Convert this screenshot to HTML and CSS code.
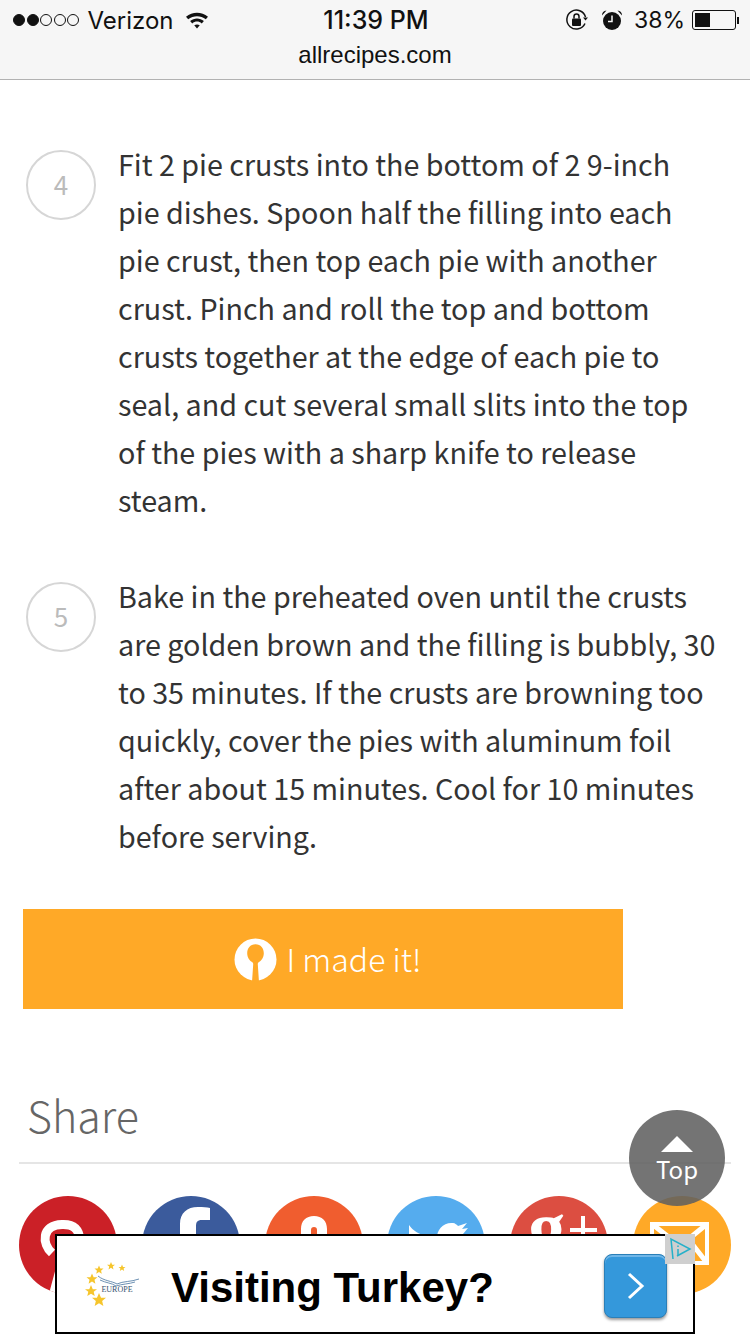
FILE: index.html
```html
<!DOCTYPE html>
<html lang="en">
<head>
	<meta charset="UTF-8">
	<title>allrecipes.com</title>
	<link rel="stylesheet" href="styles.css">
</head>
<body>
	<div id="wrap">
		<div class="top-bar">
			<div class="status">
				<div class="status-left">
					<span class="dot on"></span><span class="dot on"></span><span class="dot"></span><span class="dot"></span><span class="dot"></span>
					<span class="carrier">Verizon</span>
					<svg class="wifi" width="22" height="18" viewBox="0 0 24 19"><path d="M0 6C7 .2 17 .2 24 6L21.6 8.7C16 4.2 8 4.2 2.4 8.7Z" fill="#111"/><path d="M4.5 10.7C9 7 15 7 19.5 10.7L17.2 13.2C14 10.6 10 10.6 6.800 13.2Z" fill="#111"/><path d="M9 15.3C11 14 13 14 15 15.3L12 18.7Z" fill="#111"/></svg>
				</div>
				<div class="clock">11:39 PM</div>
				<div class="status-right">
					<svg width="24" height="24" viewBox="0 0 24 24"><path d="M20 15.5A9.500 9.500 0 1 1 20.500 9" fill="none" stroke="#111" stroke-width="1.5"/><path d="M18 9.5h5l-2.5 3z" fill="#111"/><rect x="7" y="10.5" width="9" height="7.5" rx="1" fill="#111"/><path d="M9 10.5V8.500a2.500 2.500 0 0 1 5 0v2" fill="none" stroke="#111" stroke-width="1.5"/></svg>
					<svg class="alarm" width="22" height="24" viewBox="0 0 22 24"><circle cx="11" cy="13" r="9" fill="#111"/><path d="M11 7.5V13.5H7" fill="none" stroke="#f6f6f6" stroke-width="1.5"/><path d="M1 7.5A5 5 0 0 1 5.5 2.5ZM21 7.5A5 5 0 0 0 16.5 2.5Z" fill="#111"/></svg>
					<span class="pct">38%</span>
					<div class="battery"><div class="battery-fill"></div></div>
					<div class="battery-tip"></div>
				</div>
			</div>
			<div class="url">allrecipes.com</div>
		</div>

		<div class="steps">
			<div class="step">
				<div class="num">4</div>
				<p>Fit 2 pie crusts into the bottom of 2 9-inch<br>pie dishes. Spoon half the filling into each<br>pie crust, then top each pie with another<br>crust. Pinch and roll the top and bottom<br>crusts together at the edge of each pie to<br>seal, and cut several small slits into the top<br>of the pies with a sharp knife to release<br>steam.</p>
			</div>
			<div class="step">
				<div class="num">5</div>
				<p>Bake in the preheated oven until the crusts<br>are golden brown and the filling is bubbly, 30<br>to 35 minutes. If the crusts are browning too<br>quickly, cover the pies with aluminum foil<br>after about 15 minutes. Cool for 10 minutes<br>before serving.</p>
			</div>
		</div>

		<div class="made-it">
			<svg width="43" height="43" viewBox="0 0 44 44"><circle cx="22" cy="22" r="21.5" fill="#fff"/><path d="M22 6.5C16.5 6.5 13.5 11 13.5 15.5C13.5 20 16 23 18.5 24.5C19.5 25.2 19.8 26 19.6 27.5L18.5 44H25.5L24.4 27.5C24.2 26 24.5 25.2 25.5 24.5C28 23 30.5 20 30.5 15.5C30.5 11 27.5 6.5 22 6.5Z" fill="#ffa927"/></svg>
			<span>I made it!</span>
		</div>

		<h2 class="share-title">Share</h2>
		<div class="share-icons">
			<div class="circle pinterest"><svg width="98" height="98" viewBox="0 0 98 98"><path d="M33 57C23 48 22 29 43 28.5C54 28 60 33 61 44" fill="none" stroke="#fff" stroke-width="9"/><path d="M33 98L40 72" fill="none" stroke="#fff" stroke-width="6"/></svg></div>
			<div class="circle facebook"><svg width="98" height="98" viewBox="0 0 98 98"><path d="M38 98V28C38 17 45 11 56 11C61 11 65 11 68 12V24H60C55 24 54 26 54 31V41H67L65 55H54V98Z" fill="#fff"/></svg></div>
			<div class="circle orange"><svg width="98" height="98" viewBox="0 0 98 98"><path d="M49 20C41 20 36 25 36 33V48H46V34C46 32 47 31 49 31C51 31 52 32 52 34V48H62V33C62 25 57 20 49 20Z" fill="#fff"/></svg></div>
			<div class="circle twitter"><svg width="98" height="98" viewBox="0 0 98 98"><path d="M22 29C26 35 32 38 39 40V44H22Z" fill="#fff"/><path d="M50 44C49 33 57 26 66 27C68 27 70 29 71 30L80 27L75 33L81 32L76 38V44Z" fill="#fff"/></svg></div>
			<div class="circle gplus"><span class="g">g</span><svg class="plus" width="98" height="98" viewBox="0 0 98 98"><path d="M60 34H87M73 20V48" fill="none" stroke="#fff" stroke-width="4"/></svg></div>
			<div class="circle mail"><svg width="98" height="98" viewBox="0 0 98 98"><rect x="19" y="28" width="55" height="39" fill="none" stroke="#fff" stroke-width="4"/><path d="M19 28L47 50L74 28M19 67L38 44M74 67L56 44" fill="none" stroke="#fff" stroke-width="5"/></svg></div>
		</div>

		<div class="to-top">
			<div class="arrow"></div>
			<div class="to-top-text">Top</div>
		</div>

		<div class="ad">
			<svg class="ad-logo" width="56" height="46" viewBox="0 0 56 46">
				<defs><path id="star" d="M0 -1L.29 -.31L1 -.31L.45 .14L.62 .85L0 .45L-.62 .85L-.45 .14L-1 -.31L-.29 -.31Z"/></defs>
				<g fill="#f6c52c">
					<use href="#star" transform="translate(14 9) scale(4.5)"/>
					<use href="#star" transform="translate(26 5) scale(4)"/>
					<use href="#star" transform="translate(37 7) scale(3.5)"/>
					<use href="#star" transform="translate(7 18) scale(5.5)"/>
					<use href="#star" transform="translate(6 30) scale(6)"/>
					<use href="#star" transform="translate(14 39) scale(7)"/>
				</g>
				<path d="M13 15C19 20 27 20 32 23C38 20 46 21 54 18M15 19C21 22 27 22 31 25C37 23 44 23 50 21" fill="none" stroke="#6d91b3" stroke-width="1"/>
				<text class="logo-text" x="32" y="31" text-anchor="middle">EUROPE</text>
			</svg>
			<div class="ad-title">Visiting Turkey?</div>
			<div class="ad-btn"><svg width="18" height="28" viewBox="0 0 18 28"><path d="M2 2L15 14L2 26" fill="none" stroke="#fff" stroke-width="3"/></svg></div>
			<div class="ad-choice"><svg width="30" height="30" viewBox="0 0 30 30"><path d="M8 25L6 5L25 15L12 22" fill="none" stroke="#25b0c9" stroke-width="1.5"/><path d="M13 15V21M13 11.5V13" fill="none" stroke="#25b0c9" stroke-width="1.5"/></svg></div>
		</div>
	</div>
</body>
</html>
```

FILE: styles.css
```css
* {
	margin: 0;
	padding: 0;
	box-sizing: border-box;
}
html, body {
	height: 1334px;
	overflow: hidden;
	background-color: #fff;
}
#wrap {
	width: 750px;
	height: 1334px;
	position: relative;
	overflow: hidden;
	font-family: "Noto Sans CJK SC", "Source Sans Pro", "Noto Sans", sans-serif;
	color: #333;
}
.top-bar {
	height: 80px;
	background-color: #f6f6f6;
	border-bottom: 1px solid #b2b2b2;
	font-family: "Liberation Sans", Arial, sans-serif;
	color: #111;
}
.status {
	height: 40px;
	padding: 0 11px 0 13px;
	display: flex;
	align-items: center;
	justify-content: space-between;
	font-family: Inter, "Liberation Sans", sans-serif;
	font-size: 24px;
}
.status-left, .status-right {
	width: 240px;
	display: flex;
	align-items: center;
}
.status-right {
	justify-content: flex-end;
}
.dot {
	width: 12px;
	height: 12px;
	margin-right: 1.5px;
	border: 1px solid #111;
	border-radius: 50%;
}
.dot.on {
	background-color: #111;
}
.carrier {
	margin-left: 7px;
}
.wifi {
	margin-left: 12px;
}
.clock {
	font-weight: 500;
	font-size: 25px;
}
.alarm {
	margin-left: 12px;
}
.pct {
	margin-left: 11px;
	font-size: 23px;
}
.battery {
	width: 44px;
	height: 20px;
	margin-left: 7px;
	padding: 2px;
	border: 1px solid #111;
	border-radius: 3px;
}
.battery-fill {
	width: 15px;
	height: 100%;
	background-color: #111;
}
.battery-tip {
	width: 2px;
	height: 7px;
	margin-left: 1px;
	background-color: #111;
}
.url {
	text-align: center;
	font-size: 24px;
	line-height: 30px;
}
.steps {
	padding-top: 60px;
}
.step {
	display: flex;
	margin-bottom: 48px;
	padding-left: 26px;
}
.num {
	width: 70px;
	height: 70px;
	flex: none;
	margin-top: 10px;
	padding-bottom: 3px;
	border: 2px solid #d6d6d6;
	border-radius: 50%;
	display: flex;
	align-items: center;
	justify-content: center;
	font-size: 26px;
	color: #bbb;
}
.step p {
	margin-left: 22px;
	font-size: 28.7px;
	line-height: 48px;
	white-space: nowrap;
}
.made-it {
	width: 600px;
	height: 100px;
	margin-top: 49px;
	margin-left: 23px;
	padding-left: 9px;
	background-color: #ffa927;
	display: flex;
	align-items: center;
	justify-content: center;
	color: #fff;
	font-size: 32px;
	font-weight: 300;
}
.made-it span {
	margin-left: 10px;
	padding-bottom: 2px;
}
.share-title {
	margin: 78px 19px 0;
	padding: 0 8px;
	height: 77px;
	border-bottom: 2px solid #e5e5e5;
	font-size: 43px;
	line-height: 54px;
	font-weight: 300;
	color: #666;
}
.share-icons {
	margin: 32px 19px 0;
	display: flex;
	justify-content: space-between;
}
.circle {
	width: 98px;
	height: 98px;
	border-radius: 50%;
	overflow: hidden;
	position: relative;
}
.pinterest { background-color: #cb2027; }
.facebook { background-color: #3b5b9c; }
.orange { background-color: #f05d2f; }
.twitter { background-color: #55acee; }
.gplus { background-color: #dc4e41; overflow: visible; }
.mail { background-color: #ffa927; }
.gplus .g {
	position: absolute;
	left: 18px;
	top: 12px;
	color: #fff;
	font-family: "Liberation Serif", serif;
	font-weight: bold;
	font-size: 74px;
	line-height: 40px;
}
.gplus .plus {
	position: absolute;
	left: 0;
	top: 0;
}
.to-top {
	position: absolute;
	left: 629px;
	top: 1110px;
	width: 96px;
	height: 96px;
	border-radius: 50%;
	background-color: rgba(95, 95, 95, .87);
	color: #fff;
	display: flex;
	flex-direction: column;
	align-items: center;
	padding-top: 26px;
}
.arrow {
	width: 0;
	height: 0;
	border-left: 16px solid transparent;
	border-right: 16px solid transparent;
	border-bottom: 16px solid #fff;
}
.to-top-text {
	font-size: 24px;
	line-height: 30px;
	margin-top: 2px;
}
.ad {
	position: absolute;
	left: 55px;
	top: 1234px;
	width: 640px;
	height: 100px;
	background-color: #fff;
	border: 2px solid #000;
	display: flex;
	align-items: center;
	font-family: "Liberation Sans", Arial, sans-serif;
}
.ad-logo {
	margin-left: 28px;
	flex: none;
}
.logo-text {
	font-family: "Liberation Serif", serif;
	font-size: 8px;
	fill: #34506e;
}
.ad-title {
	margin-left: 30px;
	padding-top: 8px;
	font-size: 42px;
	font-weight: bold;
	color: #000;
	white-space: nowrap;
}
.ad-btn {
	position: absolute;
	left: 547px;
	top: 18px;
	width: 63px;
	height: 64px;
	background-color: #3498db;
	border: 1px solid #2a7fb8;
	border-radius: 8px;
	box-shadow: 0 2px 3px rgba(0, 0, 0, .4), inset 0 2px 0 #6fb6e8;
	display: flex;
	align-items: center;
	justify-content: center;
}
.ad-choice {
	position: absolute;
	right: -2px;
	top: -2px;
	width: 30px;
	height: 30px;
	background-color: #cfcfcf;
}
```
